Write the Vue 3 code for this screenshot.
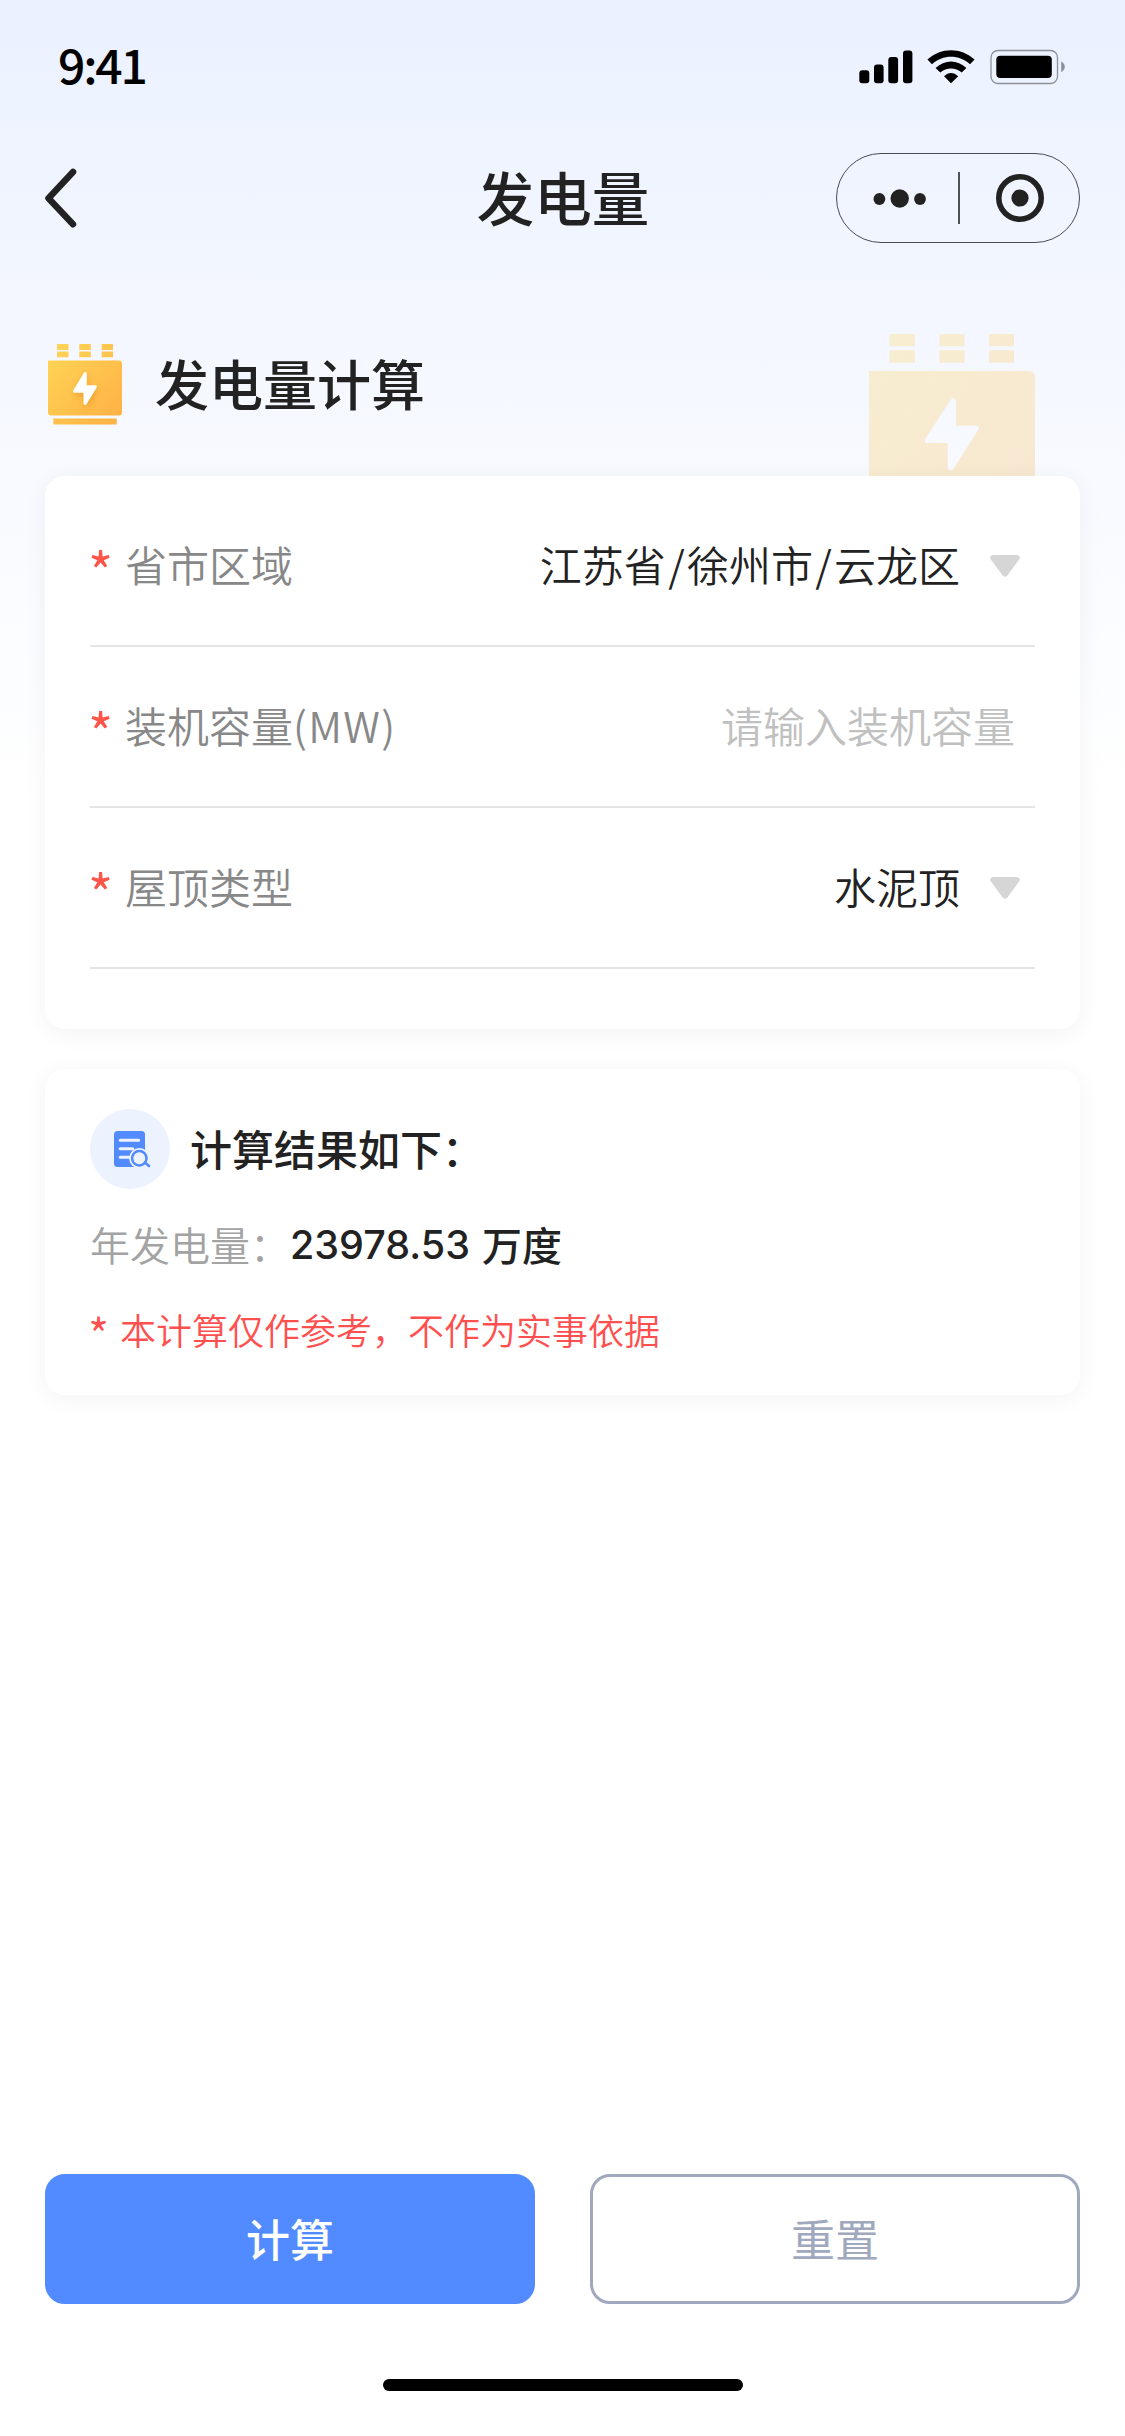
<script setup>
import { ref } from 'vue'

const fields = ref([
  { label: '省市区域', value: ['江苏省', '徐州市', '云龙区'], select: true },
  { label: '装机容量', unit: '(MW)', value: [], placeholder: '请输入装机容量', select: false },
  { label: '屋顶类型', value: ['水泥顶'], select: true },
])
</script>

<template>
  <div class="page">
    <header class="status-bar">
      <span class="time">9:41</span>
      <svg class="status-icons" width="208" height="36" viewBox="858 49 208 36">
        <rect x="859.3" y="70.3" width="10" height="13" rx="3" />
        <rect x="874" y="64.5" width="9.6" height="18.8" rx="3" />
        <rect x="888.3" y="57" width="9.8" height="26.3" rx="3" />
        <rect x="903" y="50.4" width="9.4" height="32.9" rx="3" />
        <path d="M927.4 59.5C941 47 961 47 974.6 59.5L970 64.3C959.500 54.200 942.500 54.200 932 64.300Z" />
        <path d="M935.600 68C944.500 59.200 957.500 59.200 966.400 68L961.700 72.600C955.500 67 946.500 67 940.300 72.600Z" />
        <path d="M944 76.300C948.500 71.800 953.500 71.800 958.200 76.300L951 83.300Z" />
        <rect x="991" y="50.500" width="66.500" height="33" rx="7" fill="none" stroke="#8e9198" stroke-width="1.300" />
        <rect x="996.300" y="55.700" width="55.500" height="22.300" rx="4" />
        <path d="M1061.200 61.500C1066 63.500 1066 70 1061.200 72Z" fill="#8e9198" />
      </svg>
    </header>

    <nav class="nav-bar">
      <svg class="back" width="40" height="66" viewBox="41 165 40 66">
        <path d="M73 172L48.500 198.300L73 224.200" />
      </svg>
      <h1 class="nav-title">发电量</h1>
      <div class="capsule">
        <svg width="44" height="22" viewBox="0 0 44 22">
          <circle cx="6.400" cy="12" r="5.900" />
          <circle cx="26.700" cy="11.500" r="9.200" />
          <circle cx="47" cy="12" r="5.900" />
        </svg>
        <i class="divider"></i>
        <svg width="48" height="48" viewBox="0 0 48 48">
          <circle cx="24" cy="24" r="21.200" class="ring" />
          <circle cx="24" cy="24" r="8.600" />
        </svg>
      </div>
    </nav>

    <main class="content">
      <div class="heading">
        <svg class="battery" width="76" height="82" viewBox="0 0 76 82">
          <defs>
            <linearGradient id="gold" gradientUnits="userSpaceOnUse" x1="2" y1="8" x2="76" y2="76">
              <stop offset="0" stop-color="#ffd456" />
              <stop offset="1" stop-color="#ffb044" />
            </linearGradient>
          </defs>
          <path fill="url(#gold)" d="M9 0h11.500v6H9zM31.300 0h11.500v6H31.300zM53.700 0H65v6H53.700zM9 7.500h11.500v5.700H9zM31.300 7.500h11.500v5.700H31.300zM53.700 7.500H65v5.700H53.700zM0 16.500h71a3 3 0 0 1 3 3v49a3 3 0 0 1-3 3H3a3 3 0 0 1-3-3zM5.300 74.500h63.400v6H5.300z" />
          <path class="bolt" d="M36 28.800q1-1.300 2.100-.5q.7.500.7 1.500v11.500h8.700q2.200.2 1.200 2.200L38.600 60q-1.400 1.700-2.600.6q-.5-.5-.5-1.300v-10.500h-9.200q-2-.3-1-2.500z" />
        </svg>
        <h2>发电量计算</h2>
        <svg class="watermark" width="166" height="142" viewBox="0 0 166 142">
          <defs>
            <linearGradient id="pale" gradientUnits="userSpaceOnUse" x1="0" y1="30" x2="150" y2="142">
              <stop offset="0" stop-color="#f7edd0" />
              <stop offset="1" stop-color="#f8e8d1" />
            </linearGradient>
          </defs>
          <path fill="url(#pale)" fill-rule="evenodd" d="M20.500 0h25.500v12.300H20.500zM70.500 0h25v12.300h-25zM120 0h25v12.300h-25zM20.500 16.300h25.500v12.500H20.500zM70.500 16.300h25v12.500h-25zM120 16.300h25v12.500h-25zM0 37h160a6 6 0 0 1 6 6v99H0zM81.500 66L56.500 104.500C55 107.500 56.500 109 58.500 109H78.700V133C78.700 136.500 83 137.500 85 134L109.500 95.500C111 93 109 91.700 107 91.700H87V67C87 64 83.500 63 81.500 66z" />
        </svg>
      </div>

      <section class="card form">
        <div v-for="f in fields" :key="f.label" class="row">
          <span class="star">*</span>
          <span class="label">{{ f.label }}<span v-if="f.unit" class="label-unit">{{ f.unit }}</span></span>
          <span v-if="f.value.length" class="value"><template v-for="(part, i) in f.value" :key="part"><span v-if="i" class="slash">/</span>{{ part }}</template></span>
          <span v-else class="placeholder">{{ f.placeholder }}</span>
          <svg v-if="f.select" class="caret" width="30" height="22" viewBox="0 0 30 22">
            <path d="M3 0H27Q31 .8 29.500 4L17.200 20.700Q15 23 12.800 20.700L.5 4Q-1 .8 3 0Z" />
          </svg>
        </div>
      </section>

      <section class="card result">
        <div class="result-head">
          <svg width="80" height="80" viewBox="90 1109 80 80">
            <circle cx="130" cy="1149" r="40" fill="#edf2ff" />
            <rect x="114" y="1131" width="31" height="36" rx="3.500" fill="#528bff" />
            <path d="M120.200 1140.300H138.700M120.200 1148.800H132.700M120.200 1157.200H130" stroke="#edf2ff" stroke-width="3" stroke-linecap="round" />
            <circle cx="139.300" cy="1158.200" r="10.200" fill="#edf2ff" />
            <path d="M145 1163.500L150 1169" stroke="#edf2ff" stroke-width="5" />
            <circle cx="139.300" cy="1158.200" r="7.200" fill="none" stroke="#528bff" stroke-width="2.500" />
            <path d="M144.800 1162.500L149 1166" stroke="#528bff" stroke-width="2.600" stroke-linecap="round" />
          </svg>
          <h3>计算结果如下：</h3>
        </div>
        <p class="output"><span class="output-label">年发电量：</span><span class="amount">23978.53</span><span class="unit">万度</span></p>
        <p class="note"><span class="note-star">*</span>本计算仅作参考，不作为实事依据</p>
      </section>
    </main>

    <footer class="actions">
      <button class="btn primary" type="button">计算</button>
      <button class="btn plain" type="button">重置</button>
    </footer>
    <div class="home-indicator"></div>
  </div>
</template>

<style>
body {
  margin: 0;
}
</style>

<style scoped>
.page {
  box-sizing: border-box;
  width: 1125px;
  height: 2436px;
  display: flex;
  flex-direction: column;
  overflow: hidden;
  color: #222;
  font-family: "Noto Sans CJK SC", sans-serif;
  background: linear-gradient(180deg, #eaf1ff 0, #f1f5ff 220px, #f8faff 500px, #fff 800px);
}
h1, h2, h3, p {
  margin: 0;
  font-weight: 500;
}
svg {
  display: block;
  flex: none;
}
.status-bar {
  height: 132px;
  padding: 0 59px 0 58px;
  display: flex;
  justify-content: space-between;
  align-items: center;
}
.time {
  margin-bottom: 6px;
  font-size: 48px;
  font-weight: 500;
  line-height: 60px;
  letter-spacing: -2.2px;
  color: #000;
}
.status-icons {
  margin-top: 2px;
}
.nav-bar {
  height: 132px;
  padding: 0 45px 0 41px;
  display: grid;
  grid-template-columns: 244px 1fr 244px;
  align-items: center;
}
.back path {
  fill: none;
  stroke: #222;
  stroke-width: 6.500;
  stroke-linecap: round;
  stroke-linejoin: round;
}
.nav-title {
  font-size: 57.500px;
  line-height: 80px;
  text-align: center;
  padding: 0 0 5px 5px;
}
.capsule {
  box-sizing: border-box;
  width: 244px;
  height: 90px;
  border: 1.5px solid #4a4c50;
  border-radius: 45px;
  display: flex;
  align-items: center;
  padding: 0 35px 0 36px;
}
.capsule svg {
  overflow: visible;
  fill: #222;
}
.capsule .ring {
  fill: none;
  stroke: #222;
  stroke-width: 5.600;
}
.divider {
  width: 2px;
  height: 52px;
  margin: 0 36px 0 41px;
  background: #4f5155;
}
.content {
  flex: 1;
  padding: 0 45px;
}
.heading {
  height: 212px;
  display: flex;
  align-items: flex-start;
}
.battery {
  margin: 79.500px 0 0 3px;
}
.bolt {
  fill: #fff;
  filter: drop-shadow(1px 3px 3px rgba(200, 110, 0, 0.35));
}
.heading h2 {
  margin-left: 31px;
  padding-top: 79px;
  font-size: 54px;
  line-height: 80px;
}
.watermark {
  margin: 70px 45px 0 auto;
}
.card {
  box-sizing: border-box;
  background: #fff;
  border-radius: 20px;
  box-shadow: 0 4px 24px rgba(0, 0, 0, 0.05);
}
.form {
  position: relative;
  height: 553px;
  padding: 10px 45px 0;
}
.row {
  box-sizing: border-box;
  height: 161px;
  border-bottom: 2px solid #e5e5e5;
  display: flex;
  align-items: center;
  font-size: 42px;
  line-height: 60px;
  font-weight: 350;
}
.star {
  width: 37px;
  margin: 9px 0 0 -2px;
  font-size: 54px;
  font-weight: 400;
  color: #ff5549;
}
.label,
.value,
.placeholder {
  margin-bottom: 4px;
}
.label {
  color: #888;
}
.label-unit {
  letter-spacing: 1.300px;
}
.value,
.placeholder {
  margin-left: auto;
}
.value {
  color: #222;
}
.slash {
  padding: 0 2.300px;
}
.placeholder {
  margin-right: 20px;
  color: #c0c0c0;
}
.caret {
  margin: 0 15px 0 30px;
  fill: #d6d6d6;
}
.result {
  height: 326px;
  margin-top: 40px;
  padding: 40px 45px 0;
}
.result-head {
  display: flex;
  align-items: center;
  gap: 20px;
}
.result-head h3 {
  margin-bottom: 3px;
  font-size: 42px;
  line-height: 60px;
}
.output {
  display: flex;
  align-items: center;
  height: 60px;
  margin-top: 25px;
  font-size: 40px;
  line-height: 60px;
}
.output-label {
  width: 200px;
  color: #a3a3a3;
  font-weight: 350;
}
.amount {
  padding-top: 2px;
  font-family: Inter, "Noto Sans CJK SC", sans-serif;
  font-size: 39.500px;
}
.unit {
  margin-left: 12px;
}
.note {
  display: flex;
  margin-top: 28px;
  font-size: 36px;
  line-height: 54px;
  font-weight: 350;
  color: #ff5050;
}
.note-star {
  width: 32px;
  margin-left: -2px;
  padding-top: 4px;
  font-size: 46px;
}
.actions {
  height: 130px;
  padding: 0 45px;
  display: grid;
  grid-template-columns: 490px 490px;
  justify-content: space-between;
}
.btn {
  box-sizing: border-box;
  margin: 0;
  padding: 0 0 3px;
  border: 3px solid #528bff;
  border-radius: 20px;
  font-family: inherit;
  font-size: 44px;
  line-height: 60px;
}
.primary {
  background: #528bff;
  color: #fff;
  font-weight: 500;
}
.plain {
  background: #fff;
  border-color: #a0a8be;
  color: #a0a8be;
  font-weight: 400;
}
.home-indicator {
  flex: none;
  width: 360px;
  height: 12px;
  margin: 75px 0 45px 383px;
  border-radius: 6px;
  background: #000;
}
</style>
